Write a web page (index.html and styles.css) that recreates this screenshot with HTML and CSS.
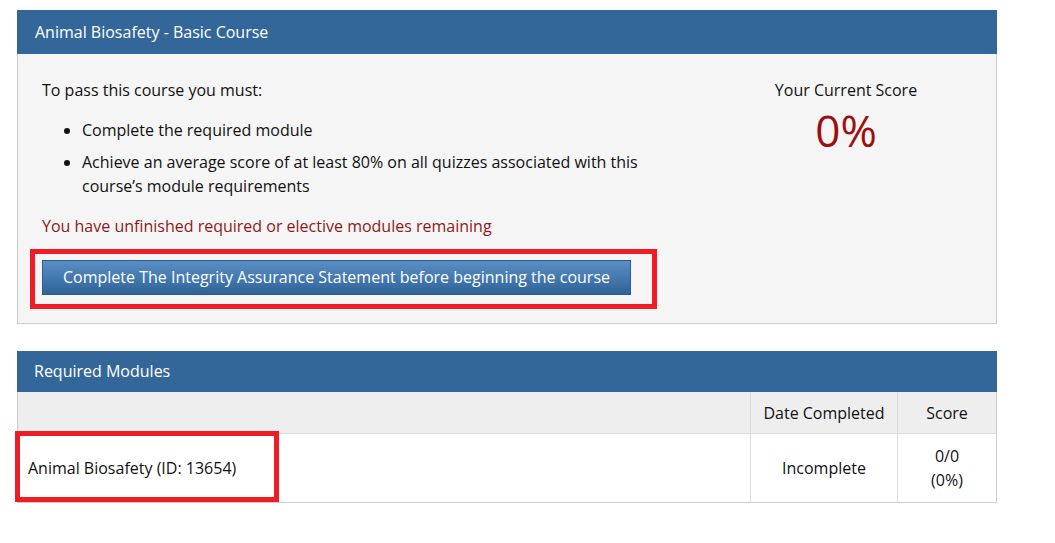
FILE: index.html
```html
<!DOCTYPE html>
<html lang="en">
<head>
  <meta charset="UTF-8">
  <title>Animal Biosafety - Basic Course</title>
  <link rel="stylesheet" href="styles.css">
</head>
<body>

  <div class="panel course">
    <div class="panel-heading">Animal Biosafety - Basic Course</div>
    <div class="panel-body">
      <div class="requirements">
        <p>To pass this course you must:</p>
        <ul>
          <li>Complete the required module</li>
          <li>Achieve an average score of at least 80% on all quizzes associated with this course’s module requirements</li>
        </ul>
        <p class="warning">You have unfinished required or elective modules remaining</p>
        <div class="marked">
          <button class="btn-start">Complete The Integrity Assurance Statement before beginning the course</button>
        </div>
      </div>
      <div class="score">
        <div class="score-label">Your Current Score</div>
        <div class="score-value">0%</div>
      </div>
    </div>
  </div>

  <div class="panel modules">
    <div class="panel-heading">Required Modules</div>
    <table>
      <thead>
        <tr>
          <th></th>
          <th class="col-date">Date Completed</th>
          <th class="col-score">Score</th>
        </tr>
      </thead>
      <tbody>
        <tr>
          <td class="module-name">Animal Biosafety (ID: 13654)</td>
          <td class="col-date">Incomplete</td>
          <td class="col-score">0/0<br>(0%)</td>
        </tr>
      </tbody>
    </table>
  </div>

</body>
</html>
```

FILE: styles.css
```css
body {
  font-family: 'Open Sans', 'Noto Sans', sans-serif;
  font-size: 16px;
  line-height: 24px;
  color: #111;
  background: #ffffff;
  margin: 0;
  padding: 10px 58px 0 17px;
}
.panel {
  width: 980px;
  box-sizing: border-box;
  border: 1px solid #cccccc;
  border-top: none;
}
.panel-heading {
  background: #346799;
  color: #ffffff;
  margin: 0 -1px;
  padding: 10px 18px;
}
.course .panel-body {
  display: flex;
  background: #f5f5f5;
  padding: 24px 24px 28px 24px;
}
.requirements {
  flex: 1;
}
.requirements p {
  margin: 0 0 16px 0;
}
.requirements ul {
  margin: 0 0 16px 0;
  padding-left: 40px;
}
.requirements li {
  margin-bottom: 8px;
  padding-right: 20px;
  max-width: 560px;
}
.requirements li:last-child {
  margin-bottom: 0;
}
.requirements .warning {
  color: #8c1a1a;
  margin-bottom: 22px;
}
.marked {
  position: relative;
  display: inline-block;
}
.marked::after {
  content: "";
  position: absolute;
  left: -12px;
  top: -11px;
  right: -26px;
  bottom: -14px;
  border: 5px solid #ee1c25;
  pointer-events: none;
}
.btn-start {
  display: block;
  font-family: inherit;
  font-size: 16px;
  line-height: 23px;
  color: #ffffff;
  background: linear-gradient(to bottom, #5a8fc6, #2f6398);
  border: 1px solid #2c5d8f;
  padding: 5px 20px;
  cursor: pointer;
}
.score {
  width: 300px;
  margin-right: -24px;
  text-align: center;
}
.score-value {
  font-size: 44px;
  line-height: 56px;
  color: #9b1111;
  margin-top: 0;
}
.modules {
  margin-top: 27px;
}
.modules .panel-heading {
  padding: 8px 17px 9px;
}
table {
  width: 100%;
  border-collapse: collapse;
}
th {
  font-weight: normal;
  background: #eeeeee;
  padding: 9px 10px 8px;
  border-left: 1px solid #dddddd;
  border-bottom: 1px solid #dddddd;
}
th:first-child,
td:first-child {
  border-left: none;
}
td {
  padding: 10px;
  border-left: 1px solid #dddddd;
  vertical-align: middle;
}
.col-date {
  width: 126px;
  text-align: center;
}
.col-score {
  width: 78px;
  text-align: center;
}
.module-name {
  position: relative;
  text-align: left;
}
.module-name::after {
  content: "";
  position: absolute;
  left: -3px;
  top: -3px;
  width: 264px;
  bottom: 0;
  box-sizing: border-box;
  border: 5px solid #ee1c25;
  pointer-events: none;
}
```
